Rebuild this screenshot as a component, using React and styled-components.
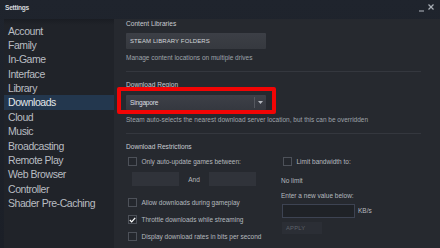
import React from "react";
import styled, { createGlobalStyle } from "styled-components";

const Global = createGlobalStyle`
  html, body { margin: 0; padding: 0; background: #1b1f27; }
  body { font-family: "Liberation Sans", Arial, sans-serif; }
  #root { width: 440px; height: 248px; }
  * { box-sizing: border-box; }
`;

const Window = styled.div`
  width: 440px;
  height: 248px;
  display: flex;
  flex-direction: column;
  overflow: hidden;
  background: linear-gradient(180deg, #1f242d 0%, #1b1f27 100%);
`;

const TitleBar = styled.div`
  height: 19px;
  flex: none;
  display: flex;
  align-items: flex-start;
  justify-content: space-between;
  padding: 3px 6px 0 5px;
`;

const Title = styled.div`
  font-size: 6.6px;
  font-weight: bold;
  letter-spacing: -0.25px;
  color: #d6d9dd;
  line-height: 10px;
`;

const Controls = styled.div`
  display: flex;
  gap: 4px;
  align-items: flex-start;
  padding-top: 1px;
`;

const Main = styled.div`
  flex: 1;
  display: flex;
  padding-left: 4px;
  min-height: 0;
`;

const Sidebar = styled.nav`
  width: 110px;
  flex: none;
  padding-top: 4.5px;
  background: linear-gradient(180deg, #1a1d23 0px, #202329 6px, #202329 100%);
`;

const NavItem = styled.div`
  height: 14.4px;
  line-height: 14.4px;
  padding-left: 4px;
  font-size: 10.5px;
  letter-spacing: -0.45px;
  white-space: nowrap;
  color: ${(p) => (p.$active ? "#e2e6ea" : "#b9bdc2")};
  background: ${(p) => (p.$active ? "#23374e" : "transparent")};
`;

const Content = styled.main`
  flex: 1;
  background: #26292f;
  padding: 0 19px 0 12px;
  min-width: 0;
`;

const SectionTitle = styled.div`
  font-size: 6.6px;
  line-height: 9px;
  color: #c9ccd1;
  margin-top: ${(p) => p.$mt || 0}px;
  white-space: nowrap;
`;

const Desc = styled.div`
  font-size: 6.5px;
  line-height: 9px;
  color: #9fa4ab;
  margin-top: ${(p) => p.$mt || 0}px;
  white-space: nowrap;
`;

const WideButton = styled.div`
  margin-top: 5px;
  width: 140px;
  height: 16px;
  display: flex;
  align-items: center;
  padding-left: 4px;
  font-size: 6px;
  letter-spacing: 0.1px;
  color: #d2d5d9;
  background: linear-gradient(180deg, #3c3f46 0%, #36393f 100%);
  border-radius: 1px;
`;

const Divider = styled.div`
  height: 1px;
  background: #34373e;
  margin-top: ${(p) => p.$mt || 0}px;
`;

const DropdownWrap = styled.div`
  position: relative;
  margin-top: 6px;
  width: 140px;
`;

const Dropdown = styled.div`
  height: 15px;
  display: flex;
  align-items: center;
  background: linear-gradient(180deg, #3d4048 0%, #35383f 100%);
  border-radius: 1px;
`;

const DropdownText = styled.div`
  flex: 1;
  padding-left: 4px;
  font-size: 6.6px;
  letter-spacing: -0.2px;
  color: #dcdfe3;
`;

const DropdownSplit = styled.div`
  width: 1px;
  height: 11px;
  background: #55585f;
`;

const DropdownArrow = styled.div`
  width: 11px;
  display: flex;
  align-items: center;
  justify-content: center;
`;

const Highlight = styled.div`
  position: absolute;
  left: -9px;
  top: -8px;
  right: -10px;
  bottom: -4px;
  border: 4px solid #f20505;
  border-radius: 2px;
  pointer-events: none;
`;

const Columns = styled.div`
  display: grid;
  grid-template-columns: 155px 1fr;
  margin-top: 6px;
`;

const Column = styled.div`
  display: flex;
  flex-direction: column;
`;

const CheckRow = styled.div`
  display: flex;
  align-items: center;
  height: 9px;
  gap: 5px;
  padding-left: 1.5px;
  margin-top: ${(p) => p.$mt || 0}px;
`;

const Box = styled.div`
  width: 9px;
  height: 9px;
  flex: none;
  border: 1px solid #4d5159;
  background: #24272d;
  display: flex;
  align-items: center;
  justify-content: center;
`;

const Label = styled.span`
  font-size: 6.5px;
  color: #b5b9bf;
  white-space: nowrap;
`;

const TimeRow = styled.div`
  display: flex;
  align-items: center;
  margin-top: 6px;
  padding-left: 6px;
`;

const TimeInput = styled.div`
  width: 47px;
  height: 14px;
  background: #30333a;
`;

const AndLabel = styled.span`
  width: 30px;
  text-align: center;
  font-size: 6.5px;
  color: #b5b9bf;
`;

const Plain = styled.div`
  font-size: 6.5px;
  line-height: 9px;
  color: #b5b9bf;
  margin-top: ${(p) => p.$mt || 0}px;
  white-space: nowrap;
`;

const ValueRow = styled.div`
  display: flex;
  align-items: center;
  gap: 3px;
  margin-top: 4px;
  padding-left: 1px;
`;

const ValueInput = styled.div`
  width: 73px;
  height: 14px;
  background: #1f2227;
  border: 1px solid #3d4352;
`;

const ApplyButton = styled.div`
  margin-top: 4px;
  margin-left: 1px;
  width: 40px;
  height: 12px;
  display: flex;
  align-items: center;
  padding-left: 4px;
  font-size: 5.8px;
  letter-spacing: 0.2px;
  color: #5f636a;
  background: #2b2e35;
`;

const navItems = [
  "Account",
  "Family",
  "In-Game",
  "Interface",
  "Library",
  "Downloads",
  "Cloud",
  "Music",
  "Broadcasting",
  "Remote Play",
  "Web Browser",
  "Controller",
  "Shader Pre-Caching",
];

function Check({ checked }) {
  return (
    <Box>
      {checked && (
        <svg width="7" height="6" viewBox="0 0 7 6">
          <polyline
            points="0.8,3 2.7,4.9 6.2,0.9"
            fill="none"
            stroke="#ffffff"
            strokeWidth="1.3"
          />
        </svg>
      )}
    </Box>
  );
}

function CheckItem({ label, checked, mt }) {
  return (
    <CheckRow $mt={mt}>
      <Check checked={checked} />
      <Label>{label}</Label>
    </CheckRow>
  );
}

export default function App() {
  return (
    <>
      <Global />
      <Window>
        <TitleBar>
          <Title>Settings</Title>
          <Controls>
            <svg width="5" height="8" viewBox="0 0 5 8">
              <line x1="0" y1="7" x2="5" y2="7" stroke="#9ca1a8" strokeWidth="1.2" />
            </svg>
            <svg width="6" height="6" viewBox="0 0 6 6">
              <line x1="0.5" y1="0.5" x2="5.5" y2="5.5" stroke="#a9aeb5" strokeWidth="1.2" />
              <line x1="5.5" y1="0.5" x2="0.5" y2="5.5" stroke="#a9aeb5" strokeWidth="1.2" />
            </svg>
          </Controls>
        </TitleBar>
        <Main>
          <Sidebar>
            {navItems.map((n) => (
              <NavItem key={n} $active={n === "Downloads"}>
                {n}
              </NavItem>
            ))}
          </Sidebar>
          <Content>
            <SectionTitle>Content Libraries</SectionTitle>
            <WideButton>STEAM LIBRARY FOLDERS</WideButton>
            <Desc $mt={4}>Manage content locations on multiple drives</Desc>
            <Divider $mt={9} />
            <SectionTitle $mt={8}>Download Region</SectionTitle>
            <DropdownWrap>
              <Dropdown>
                <DropdownText>Singapore</DropdownText>
                <DropdownSplit />
                <DropdownArrow>
                  <svg width="5" height="3" viewBox="0 0 5 3">
                    <polygon points="0,0 5,0 2.5,3" fill="#b4b8be" />
                  </svg>
                </DropdownArrow>
              </Dropdown>
              <Highlight />
            </DropdownWrap>
            <Desc $mt={5}>
              Steam auto-selects the nearest download server location, but this can be overridden
            </Desc>
            <Divider $mt={9} />
            <SectionTitle $mt={8}>Download Restrictions</SectionTitle>
            <Columns>
              <Column>
                <CheckItem label="Only auto-update games between:" />
                <TimeRow>
                  <TimeInput />
                  <AndLabel>And</AndLabel>
                  <TimeInput />
                </TimeRow>
                <CheckItem mt={12} label="Allow downloads during gameplay" />
                <CheckItem mt={8} checked label="Throttle downloads while streaming" />
                <CheckItem mt={8} label="Display download rates in bits per second" />
              </Column>
              <Column>
                <CheckItem label="Limit bandwidth to:" />
                <Plain $mt={9.5}>No limit</Plain>
                <Plain $mt={6}>Enter a new value below:</Plain>
                <ValueRow>
                  <ValueInput />
                  <Label>KB/s</Label>
                </ValueRow>
                <ApplyButton>APPLY</ApplyButton>
              </Column>
            </Columns>
          </Content>
        </Main>
      </Window>
    </>
  );
}
